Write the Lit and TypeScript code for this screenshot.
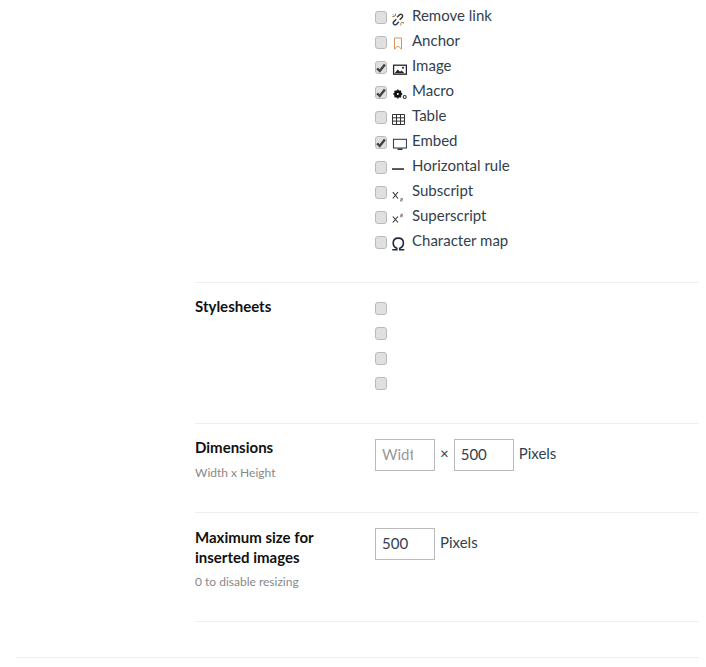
import { LitElement, html, css, svg } from "lit";
import { customElement } from "lit/decorators.js";

const icons: Record<string, unknown> = {
  unlink: svg`<path d="M4.300 7.200 1.900 9.600a1.900 1.900 0 0 0 0 2.600 1.900 1.900 0 0 0 2.600 0L6.900 9.800" fill="none" stroke="#2f3d55" stroke-width="1.500"/><path d="M7.700 7.800 10.100 5.400a1.900 1.900 0 0 0 0-2.600 1.900 1.900 0 0 0-2.600 0L5.100 5.200" fill="none" stroke="#3a3a3a" stroke-width="1.500"/><path d="M.2 4.500h2.600M3.500 1.500v2.500M1 2.300l1.700 1.700M8.800 11v2.500M9.300 10.500h2.700M9.500 9.800l1.900 1.900" stroke="#b08a55" stroke-width="1"/>`,
  anchor: svg`<path d="M2.500 1h7v11L6 9l-3.500 3z" fill="none" stroke="#d8915a" stroke-width="1"/>`,
  image: svg`<rect x="1.600" y="3.200" width="12.800" height="9" fill="#fff" stroke="#2a2230" stroke-width="1.300"/><path d="M2.600 11.300 5.800 7.400l2.200 2.400 1.500-1.200 3 2.700z" fill="#222"/><circle cx="11" cy="5.700" r="1" fill="#222"/>`,
  macro: svg`<circle cx="5.800" cy="7" r="2.700" fill="none" stroke="#111" stroke-width="2.100"/><path d="M5.800 2.500v9M1.300 7h9M2.600 3.800l6.400 6.400M9 3.800l-6.400 6.400" stroke="#111" stroke-width="1.300"/><circle cx="5.800" cy="7" r="1" fill="#fff"/><circle cx="12.700" cy="10" r="1.500" fill="none" stroke="#333" stroke-width="1.100"/>`,
  table: svg`<path d="M.5 2.500h12v10H.5zM.5 5.800h12M.5 9.100h12M4.500 2.500v10M8.500 2.500v10" fill="none" stroke="#333" stroke-width="1"/>`,
  embed: svg`<rect x="1.500" y="2.300" width="13" height="8.700" fill="none" stroke="#33405a" stroke-width="1.100"/><rect x="5.500" y="11.500" width="5" height="1.500" fill="#333"/>`,
  rule: svg`<rect x="0" y="6.300" width="12" height="1.500" fill="#222"/>`,
  sub: svg`<path d="M.8 5l5.200 6.500M6 5 .8 11.500" stroke="#333" stroke-width="1.100"/><path d="M8.500 11.500h2v1.200h-2v1.300h2.200" fill="none" stroke="#6a5a4a" stroke-width=".7"/>`,
  sup: svg`<path d="M.8 4.500l5.200 6M6 4.500l-5.200 6" stroke="#333" stroke-width="1.100"/><path d="M8.500 2.200h2v1.200h-2v1.300h2.200" fill="none" stroke="#555" stroke-width=".7"/>`,
  omega: svg`<path d="M.3 12.800h4.500v-1.600C2.500 10.200 1.200 8.200 1.200 5.900 1.200 3 3.300 1.100 6.300 1.100s5.100 1.900 5.100 4.800c0 2.300-1.300 4.300-3.600 5.300v1.600h4.500" fill="none" stroke="#1d2a3a" stroke-width="1.600"/>`,
};

const ITEMS: [string, string, boolean][] = [
  ["Remove link", "unlink", false],
  ["Anchor", "anchor", false],
  ["Image", "image", true],
  ["Macro", "macro", true],
  ["Table", "table", false],
  ["Embed", "embed", true],
  ["Horizontal rule", "rule", false],
  ["Subscript", "sub", false],
  ["Superscript", "sup", false],
  ["Character map", "omega", false],
];

@customElement("app-root")
export class AppRoot extends LitElement {
  static styles = css`
    :host {
      display: block;
      height: 667px;
      overflow: hidden;
      background: #fff;
      color: #333f4d;
      font-family: Lato, "Open Sans", sans-serif;
      font-size: 15px;
      line-height: 25px;
    }
    .page {
      margin: 0 7px 0 16px;
      padding-bottom: 35px;
      border-bottom: 1px solid #efefef;
    }
    .section {
      margin-left: 179px;
      display: grid;
      grid-template-columns: 180px 1fr;
      border-bottom: 1px solid #efefef;
    }
    .s1 { padding: 4px 0 28px; }
    .s2 { padding: 12px 0 28px; }
    .s3 { padding: 15px 0 31px; }
    .s4 { padding: 15px 0 31px; }
    .title {
      font-weight: 700;
      color: #111;
      font-size: 15px;
      line-height: 20px;
    }
    .s2 .title { margin-top: 1px; }
    .s3 .title { margin-top: -2px; }
    .s4 .title { margin-top: -1px; }
    .hint {
      font-size: 12px;
      line-height: 16px;
      color: #888;
      margin-top: 7px;
    }
    .s3 .hint { margin-top: 8px; }
    .row {
      display: flex;
      align-items: center;
      height: 25px;
    }
    .box {
      box-sizing: border-box;
      width: 12px;
      height: 13px;
      margin-top: 2px;
      border: 1px solid #bababa;
      border-radius: 3px;
      background: #e0e0e0;
      display: flex;
      align-items: center;
      justify-content: center;
      flex: none;
    }
    .box svg { display: block; width: 10px; height: 10px; }
    .icon {
      display: block;
      width: 15px;
      height: 15px;
      margin: 5px 5px 0 5px;
      flex: none;
    }
    .text { position: relative; top: -1px; }
    .fields {
      display: flex;
      height: 32px;
      line-height: 29px;
    }
    input {
      box-sizing: border-box;
      width: 60px;
      height: 32px;
      padding: 0 21px 3px 6px;
      border: 1px solid #bbb;
      border-radius: 0;
      outline: none;
      background: #fff;
      color: #333f4d;
      font: 15px Lato, "Open Sans", sans-serif;
    }
    input::placeholder { color: #999; opacity: 1; }
    .times { margin: 0 5px; }
    .unit { margin-left: 5px; }
  `;

  private box(checked: boolean) {
    return html`<span class="box">${checked
      ? html`<svg viewBox="0 0 9 9"><path d="M1 4.800 3.400 7.200 8 1.300" fill="none" stroke="#444" stroke-width="2.200"/></svg>`
      : ""}</span>`;
  }

  render() {
    return html`
      <div class="page">
        <div class="section s1">
          <div></div>
          <div>
            ${ITEMS.map(
              ([label, icon, checked]) => html`
                <div class="row">
                  ${this.box(checked)}
                  <svg class="icon" viewBox="0 0 15 15">${icons[icon]}</svg>
                  <span class="text">${label}</span>
                </div>
              `
            )}
          </div>
        </div>
        <div class="section s2">
          <div class="title">Stylesheets</div>
          <div>
            ${[0, 1, 2, 3].map(() => html`<div class="row">${this.box(false)}</div>`)}
          </div>
        </div>
        <div class="section s3">
          <div>
            <div class="title">Dimensions</div>
            <div class="hint">Width x Height</div>
          </div>
          <div class="fields">
            <input placeholder="Width" />
            <span class="times">×</span>
            <input value="500" />
            <span class="unit">Pixels</span>
          </div>
        </div>
        <div class="section s4">
          <div>
            <div class="title">Maximum size for<br />inserted images</div>
            <div class="hint">0 to disable resizing</div>
          </div>
          <div class="fields">
            <input value="500" />
            <span class="unit">Pixels</span>
          </div>
        </div>
      </div>
    `;
  }
}
